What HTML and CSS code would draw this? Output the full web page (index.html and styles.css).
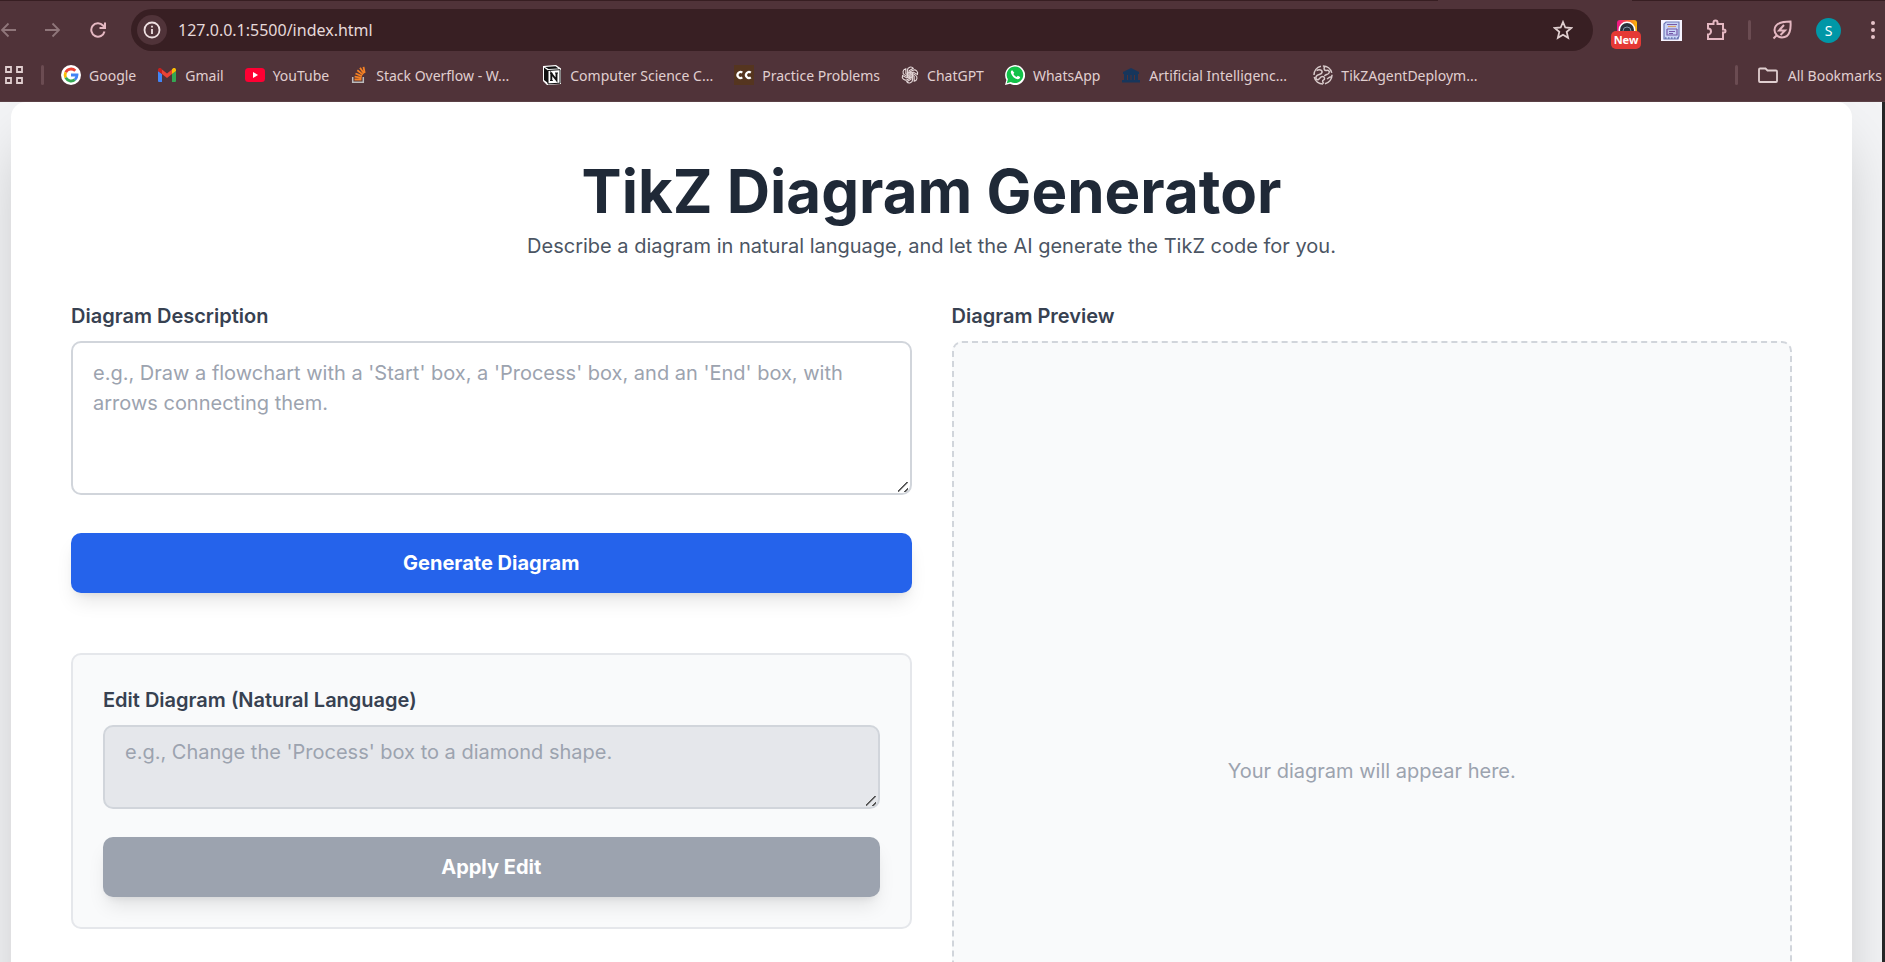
FILE: index.html
```html
<!DOCTYPE html>
<html lang="en">
<head>
<meta charset="utf-8">
<title>TikZ Diagram Generator</title>
<link rel="stylesheet" href="styles.css">
</head>
<body>
<div class="browser">
  <header class="chrome">
    <div class="tab-edge"></div>
    <div class="toolbar">
      <div class="nav">
        <button class="icon-btn dim" aria-label="Back"><svg width="16" height="16" viewBox="0 0 16 16"><path d="M16 8H2M8.500 1.500L2 8l6.500 6.500"/></svg></button>
        <button class="icon-btn dim" aria-label="Forward"><svg width="16" height="16" viewBox="0 0 16 16"><path d="M0 8h14M7.500 1.500L14 8l-6.500 6.500"/></svg></button>
        <button class="icon-btn pink" aria-label="Reload"><svg width="16" height="16" viewBox="0 0 16 16"><path d="M14.500 9.500A6.700 6.700 0 1 1 13 3.500L14.500 5.500M15 0.500V6H9.500"/></svg></button>
      </div>
      <div class="omnibox">
        <button class="site-info" aria-label="View site information"><svg width="18" height="18" viewBox="0 0 18 18"><circle cx="9" cy="9" r="7.500"/><path d="M9 8v5M9 4.800v1.800"/></svg></button>
        <input class="url" aria-label="Address" value="127.0.0.1:5500/index.html">
        <button class="icon-btn star" aria-label="Bookmark this tab"><svg width="20" height="20" viewBox="0 0 20 20"><path d="M10 2l2.300 5.500 6 .5-4.600 3.900 1.400 5.900L10 14.700l-5.100 3.100 1.400-5.900L1.700 8l6-.5z"/></svg></button>
      </div>
      <div class="extensions">
        <button class="icon-btn ext-new" aria-label="Screen capture extension">
          <svg width="22" height="22" viewBox="0 0 22 22"><defs><linearGradient id="cam"><stop offset="0" stop-color="#f0128c"/><stop offset=".5" stop-color="#f5553c"/><stop offset="1" stop-color="#fbbc05"/></linearGradient></defs><rect x="1" y="1" width="20" height="20" rx="3" fill="url(#cam)" stroke="none"/><circle cx="11" cy="11" r="8.500" fill="#fff" stroke="none"/><circle cx="11" cy="11" r="7" fill="#29323c" stroke="none"/><circle cx="11" cy="12" r="4" stroke="#8595a8" stroke-width="1"/></svg>
          <span class="badge">New</span>
        </button>
        <button class="icon-btn" aria-label="Notes extension"><svg class="notes" width="21" height="21" viewBox="0 0 21 21"><path fill="#f6f4ff" stroke="none" d="M0 0h21v21H0z"/><path fill="#c9d4f6" stroke="#6f79b8" d="M5 2h13v14l-1 3H3V4z"/><path stroke="#d9a36a" d="M7 6.500h8"/><path stroke="#7559aa" d="M6 4.500h10M6 9h10M6 9v6h10V9M8 11.500h6M8 13.500h4"/><path stroke="#40528f" stroke-dasharray="1.500 1.500" d="M4 18h13"/></svg></button>
        <button class="icon-btn pink" aria-label="Extensions"><svg width="22" height="22" viewBox="0 0 22 22"><path d="M2 5h5.500V3.500a2 2 0 0 1 4 0V5H17v5.500h1a1.500 1.500 0 0 1 0 3h-1V20H2v-4.500a3 3 0 0 0 0-6z"/></svg></button>
        <span class="divider"></span>
        <button class="icon-btn pink" aria-label="Energy saver"><svg width="20" height="20" viewBox="0 0 20 20"><path d="M18.500 1.500C19 8 18.500 17.500 10 17.500c-2.500 0-4-1-5.200-2.200C3.200 13.700 2.500 12 2.500 10c0-7 8-8.500 16-8.500zM5 15l-3.500 3.500"/><path d="M12 5l-5 5.500h6L8.500 15" /></svg></button>
        <button class="avatar" aria-label="Profile">S</button>
        <button class="icon-btn menu" aria-label="Menu"><svg width="6" height="20" viewBox="0 0 6 20"><g fill="#e5c3c9" stroke="none"><circle cx="3" cy="3" r="2"/><circle cx="3" cy="10" r="2"/><circle cx="3" cy="17" r="2"/></g></svg></button>
      </div>
    </div>
    <nav class="bookmarks" aria-label="Bookmarks">
      <button class="icon-btn apps" aria-label="Apps"><svg width="20" height="20" viewBox="0 0 20 20"><path d="M2 2h5v5H2zM13 2h5v5h-5zM2 13h5v5H2zM13 13h5v5h-5z"/></svg></button>
      <span class="divider"></span>
      <div class="links">
        <a class="bm" href="#"><svg width="20" height="20" viewBox="0 0 20 20"><circle cx="10" cy="10" r="10" fill="#fff"/><g fill="none" stroke-width="2.800"><path stroke="#ea4335" d="M4.700 7.300A6 6 0 0 1 14.300 5.800"/><path stroke="#fbbc05" d="M4.700 12.700a6 6 0 0 1 0-5.400"/><path stroke="#34a853" d="M13.900 14.600A6 6 0 0 1 4.700 12.700"/><path stroke="#4285f4" d="M10 10h6c0 2-.8 3.600-2.100 4.600"/></g></svg>Google</a>
        <a class="bm" href="#"><svg width="20" height="20" viewBox="0 0 20 20"><path fill="#4285f4" d="M1 6l4 3v8H2q-1 0-1-1z"/><path fill="#34a853" d="M15 9l4-3v10q0 1-1 1h-3z"/><path fill="#ea4335" d="M5 4.500l5 4 5-4V9l-5 4-5-4z"/><path fill="#c5221f" d="M1 6V5c0-2 2-2.500 3.200-1.500L5 4.200V9z"/><path fill="#fbbc04" d="M19 6V5c0-2-2-2.500-3.200-1.500l-.8.700V9z"/></svg>Gmail</a>
        <a class="bm" href="#"><svg width="20" height="20" viewBox="0 0 20 20"><rect y="3" width="20" height="14" rx="3.500" fill="#ff0033"/><path fill="#fff" d="M8 7l5 3-5 3z"/></svg>YouTube</a>
        <a class="bm long" href="#"><svg width="18" height="20" viewBox="0 0 16 20"><g fill="none" stroke-width="1.500"><path stroke="#bcbbbb" d="M1.700 12v5.200h10.600V12"/><path stroke="#f48024" stroke-width="1.800" d="M3.500 14.500h7M3.600 11.600l7 1.200M4.500 8.500l6.500 2.700M6.300 5.300l5.600 4.300M9 2.800l4 5.600M12.500 1.800l1.200 6.200"/></g></svg>Stack Overflow - W...</a>
        <a class="bm long" href="#"><svg width="20" height="20" viewBox="0 0 20 20"><path fill="#fff" d="M1 1l13-1 5 3.500V19l-14 1-4-4z"/><path fill="#111" d="M2 2.500l4 3V18l-4-3zM3 2l10.500-.8L16.500 3.500 6.500 4z"/><path fill="#fff" stroke="#111" d="M6 5.500l12-.8v13.500l-12 .7z"/><path fill="none" stroke="#111" stroke-width="1.900" d="M9.300 15.500v-7l5.200 6.500v-7"/><path stroke="#111" d="M8 8.300h2.500M13 8h3M8 15.500h2.800"/></svg>Computer Science C...</a>
        <a class="bm" href="#"><svg width="20" height="20" viewBox="0 0 20 20"><path fill="#55351f" d="M0 0h20v20H0z"/><path fill="none" stroke="#fff" stroke-width="2.200" d="M8.300 7.600a3 3 0 1 0 0 4.800M16.800 7.600a3 3 0 1 0 0 4.800"/></svg>Practice Problems</a>
        <a class="bm" href="#"><svg width="18" height="20" viewBox="-9 -10 18 20"><g fill="none" stroke="#e6d9da" stroke-width="1.100"><path id="p" d="M-2.600 1.500V-4.800A3.300 3.300 0 0 1 3.300-6.700L-1-4.200V.5"/><use href="#p" transform="rotate(60)"/><use href="#p" transform="rotate(120)"/><use href="#p" transform="rotate(180)"/><use href="#p" transform="rotate(240)"/><use href="#p" transform="rotate(300)"/></g></svg>ChatGPT</a>
        <a class="bm" href="#"><svg width="20" height="20" viewBox="0 0 20 20"><path fill="#fff" d="M0 20l1.400-5A10 10 0 1 1 5 18.700z"/><path fill="#12c148" d="M1.800 18.200l1.100-4A8.300 8.300 0 1 1 5.800 17z"/><path fill="#fff" d="M7.200 5.200c-1 .4-1.700 1.500-1.200 3 1 3 3.500 5.400 6.500 6 1.500.2 2.600-.8 2.700-2.200l-2.400-1.200-1.100 1.200c-1.500-.6-2.600-1.700-3.300-3.100l.9-1.200z"/></svg>WhatsApp</a>
        <a class="bm long" href="#"><svg width="20" height="20" viewBox="0 0 20 20"><path fill="#17365c" d="M10 3l8 4v2h-1v6h2v2.500H1V15h2V9H2V7z"/><path stroke="#503339" d="M6.500 10v5M10 10v5M13.500 10v5"/></svg>Artificial Intelligenc...</a>
        <a class="bm long" href="#"><svg width="20" height="20" viewBox="0 0 20 20"><g fill="none" stroke="#d8caca" stroke-width="1.500"><circle cx="10" cy="10" r="9" stroke-dasharray="12 2"/><path d="M3.500 5.500c3-1.500 6-.5 5.500 2s-4 1.500-5.500 3.500 0 4.500 2 3.500 1.500-3 4-3 2.500 3 1 3.500-1 2.500.5 3.500M12 1.500c-2 2-.5 4.500 1.500 4s3.500.5 2.500 2.500-3.500 1-4.500 3"/><path d="M14 14c1.500-1 2.500-2.500 4.500-2"/></g></svg>TikZAgentDeploym...</a>
      </div>
      <span class="divider"></span>
      <a class="bm all" href="#"><svg width="20" height="20" viewBox="0 0 20 20"><path fill="none" stroke="#e0cfd0" stroke-width="1.800" d="M1 4.500q0-1 1-1h5.500l2 2H18q1 0 1 1V16q0 1-1 1H2q-1 0-1-1z"/></svg>All Bookmarks</a>
    </nav>
  </header>
  <div class="viewport">
    <main class="card">
      <div class="intro">
        <h1>TikZ Diagram Generator</h1>
        <p>Describe a diagram in natural language, and let the AI generate the TikZ code for you.</p>
      </div>
      <div class="columns">
        <section class="col">
          <label for="desc">Diagram Description</label>
          <textarea id="desc" class="field" rows="4" placeholder="e.g., Draw a flowchart with a 'Start' box, a 'Process' box, and an 'End' box, with arrows connecting them."></textarea>
          <button class="action primary">Generate Diagram</button>
          <div class="edit">
            <label for="edit">Edit Diagram (Natural Language)</label>
            <textarea id="edit" class="field compact" rows="2" disabled placeholder="e.g., Change the 'Process' box to a diamond shape."></textarea>
            <button class="action" disabled>Apply Edit</button>
          </div>
        </section>
        <section class="col">
          <h2>Diagram Preview</h2>
          <div class="preview">Your diagram will appear here.</div>
        </section>
      </div>
    </main>
  </div>
</div>
</body>
</html>
```
FILE: styles.css
```css
* { box-sizing: border-box; }
body { margin: 0; font-family: Inter, sans-serif; }
button, input, textarea { font: inherit; }
button { border: 0; padding: 0; cursor: pointer; }
svg { display: block; flex: none; }

.browser { display: flex; flex-direction: column; height: 100vh; overflow: hidden; }

/* Browser chrome */
.chrome { flex: none; background: #503339; color: #e0cfd0; font-family: "Noto Sans", sans-serif; border-bottom: 1px solid #5b4146; }
.tab-edge { height: 1px; background: linear-gradient(to right, #371e22 76.3%, #503339 76.3% 86.6%, #371e22 86.6%); }
.toolbar { display: flex; align-items: center; height: 58px; }
.icon-btn { display: flex; align-items: center; justify-content: center; background: none; }
.icon-btn svg { fill: none; stroke: #e0cfd0; stroke-width: 1.8; }
.icon-btn.dim svg { stroke: #8f767a; }
.icon-btn.pink svg { stroke: #e5b8c2; stroke-width: 2; }
.icon-btn .notes { stroke-width: 1.2; }
.nav { display: flex; gap: 29px; margin-right: 25px; }
.omnibox { flex: 1; display: flex; align-items: center; height: 42px; padding: 0 20px 0 6px; border-radius: 21px; background: #381f23; }
.site-info { display: flex; align-items: center; justify-content: center; width: 30px; height: 30px; border-radius: 15px; background: #503339; }
.site-info svg { fill: none; stroke: #efe0e1; stroke-width: 1.8; }
.url { flex: 1; min-width: 0; padding: 0 11px; border: 0; outline: 0; background: none; color: #e6d9da; font-size: 16px; }
.extensions { display: flex; align-items: center; gap: 24px; padding: 0 9px 0 22px; }
.extensions .divider { margin: 0 -3px 0 -4px; }
.extensions .menu { margin-left: 5px; }
.ext-new { position: relative; padding: 0 1px; margin-right: -2px; }
.badge { position: absolute; top: 12px; left: -4px; width: 30px; height: 18px; border-radius: 5px; background: #e53935; color: #fff; font-size: 11px; font-weight: 700; line-height: 18px; text-align: center; }
.divider { flex: none; width: 3px; height: 20px; border-radius: 2px; background: #6b4c52; }
.avatar { width: 25px; height: 25px; border-radius: 50%; background: #0097a7; color: #fff; font-size: 14px; line-height: 25px; }

.bookmarks { display: flex; align-items: center; height: 34px; margin-bottom: 8px; padding: 0 3px 2px 4px; font-size: 14px; }
.apps { margin-right: 17px; }
.links { flex: 1; display: flex; gap: 21px; margin-left: 17px; min-width: 0; }
.bm { display: flex; align-items: center; gap: 8px; color: inherit; text-decoration: none; white-space: nowrap; }
.bm.long { width: 171px; }
.bm.all { margin-left: 20px; gap: 10px; }

/* Page */
.viewport { flex: 1; min-height: 0; overflow: hidden; padding: 0 30px 0 11px; background: #f3f4f6; border-right: 3px solid #262626; }
.card { padding: 59px 60px 60px; border-radius: 15px; background: #fff; box-shadow: 0 31px 62px -15px rgba(0, 0, 0, .25); }
.intro { margin-bottom: 40px; text-align: center; }
h1 { margin: 0 0 10px; color: #1f2937; font-size: 60px; font-weight: 700; line-height: 60px; }
.intro p { margin: 0; color: #4b5563; font-size: 20px; line-height: 30px; }
.columns { display: grid; grid-template-columns: 1fr 1fr; gap: 40px; }
.col { display: flex; flex-direction: column; min-width: 0; }
label, h2 { margin: 0 0 10px; color: #374151; font-size: 20px; font-weight: 600; line-height: 30px; }
.field { display: block; width: 100%; padding: 15px 20px; border: 2px solid #d1d5db; border-radius: 10px; background: #fff; font-size: 20px; line-height: 30px; resize: vertical; }
.field::placeholder { color: #9ca3af; }
.field::-webkit-resizer {
  background: linear-gradient(135deg, transparent 6px, #555 6px 7px, transparent 8px 11px, #555 11px 12px, transparent 13px) 3px 4px / 10px 10px no-repeat;
}
.field:disabled { background: #e5e7eb; }
.field.compact { padding: 10px 20px; }
.action { width: 100%; height: 60px; border-radius: 10px; background: #9ca3af; color: #fff; font-size: 20px; font-weight: 700; box-shadow: 0 12px 19px -4px rgba(0, 0, 0, .1), 0 5px 8px -5px rgba(0, 0, 0, .1); }
.action.primary { margin: 38px 0 60px; background: #2563eb; }
.edit { padding: 30px; border: 2px solid #e5e7eb; border-radius: 10px; background: #f9fafb; }
.edit label { display: block; }
.edit .action { margin-top: 28px; display: block; }
.preview { display: flex; align-items: center; justify-content: center; min-height: 860px; border: 2px dashed #d1d5db; border-radius: 10px; background: #f9fafb; color: #9ca3af; font-size: 20px; line-height: 30px; }
```
